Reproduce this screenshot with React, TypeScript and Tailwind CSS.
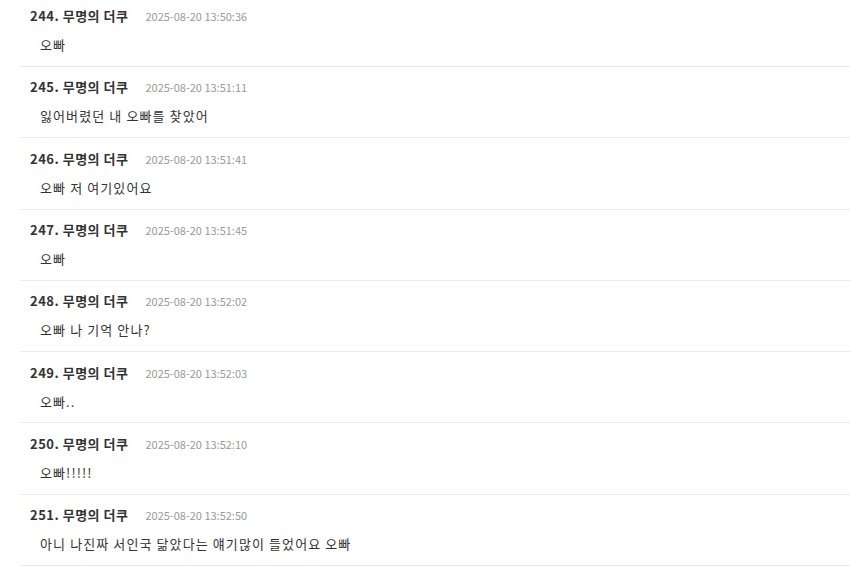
import React from "react";

const items = [
  { n: 244, t: "2025-08-20 13:50:36", c: "오빠" },
  { n: 245, t: "2025-08-20 13:51:11", c: "잃어버렸던 내 오빠를 찾았어" },
  { n: 246, t: "2025-08-20 13:51:41", c: "오빠 저 여기있어요" },
  { n: 247, t: "2025-08-20 13:51:45", c: "오빠" },
  { n: 248, t: "2025-08-20 13:52:02", c: "오빠 나 기억 안나?" },
  { n: 249, t: "2025-08-20 13:52:03", c: "오빠.." },
  { n: 250, t: "2025-08-20 13:52:10", c: "오빠!!!!!" },
  { n: 251, t: "2025-08-20 13:52:50", c: "아니 나진짜 서인국 닮았다는 얘기많이 들었어요 오빠" },
];

export default function App() {
  return (
    <div
      className="w-[850px] h-[567px] overflow-hidden bg-white"
      style={{ fontFamily: '"Noto Sans CJK KR", "Noto Sans", sans-serif' }}
    >
      <div className="pl-5 mt-[-4.4px]">
        {items.map((it) => (
          <div
            key={it.n}
            className="h-[71.3px] border-b border-[#ebebeb] pt-[10.5px] flex flex-col"
          >
            <div className="flex items-center h-5 pl-[10px]">
              <span className="text-[13px] font-bold text-[#333] leading-5 tracking-[0.5px]">
                {it.n}. 무명의 더쿠
              </span>
              <span className="ml-[17px] text-[11px] text-[#9a9a9a] leading-5 tracking-[0px]">
                {it.t}
              </span>
            </div>
            <div className="mt-[9px] h-5 pl-5 text-[13px] text-[#333] leading-5 tracking-[1.1px]">
              {it.c}
            </div>
          </div>
        ))}
      </div>
    </div>
  );
}
